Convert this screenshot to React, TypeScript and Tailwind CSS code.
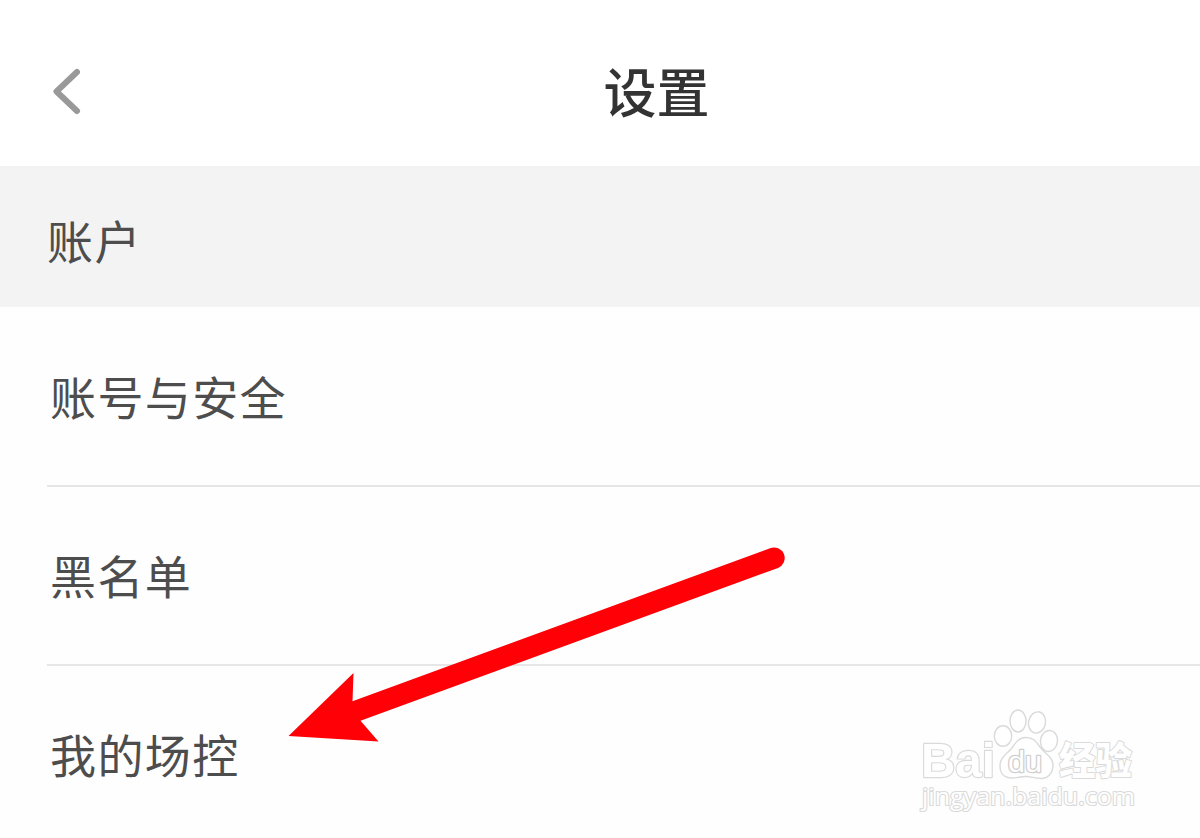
const rows = ['账号与安全', '黑名单', '我的场控'];

function Header() {
  return (
    <header className="relative flex h-[166px] items-center justify-center bg-white pt-[15px] pl-[113px]">
      <button type="button" aria-label="返回" className="absolute top-[66px] left-[48px]">
        <svg width="36" height="50" viewBox="0 0 36 50" fill="none">
          <path
            d="M29 6L8.5 25.5L29 45"
            stroke="#999999"
            strokeWidth="6"
            strokeLinecap="round"
            strokeLinejoin="round"
          />
        </svg>
      </button>
      <h1 className="text-[53px] leading-none font-medium tracking-normal text-[#333333]">设置</h1>
    </header>
  );
}

function Arrow() {
  return (
    <svg className="pointer-events-none absolute top-0 left-0" width="1200" height="838" viewBox="0 0 1200 838">
      <path
        d="M288.5 736L353.5 673L352.5 701.3L770 548.2A10.6 10.6 0 0 1 778 568L360.5 720.7L378.5 741.5Z"
        fill="#ff0006"
      />
    </svg>
  );
}

function Watermark() {
  return (
    <svg
      className="pointer-events-none absolute top-[700px] left-[910px] tracking-normal"
      width="240"
      height="120"
      viewBox="0 0 240 120"
      fill="#ffffff"
      stroke="#dadada"
      strokeWidth="1.4"
      strokeLinejoin="round"
    >
      <text
        className="font-['Liberation_Sans',sans-serif] font-bold"
        x="11"
        y="76.5"
        fontSize="49"
        textLength="74"
        lengthAdjust="spacingAndGlyphs"
        paintOrder="stroke"
        strokeWidth="2.4"
      >
        Bai
      </text>
      <text
        className="font-['Noto_Sans_CJK_SC',sans-serif] font-black"
        x="149"
        y="74"
        fontSize="38"
        textLength="73"
        lengthAdjust="spacingAndGlyphs"
        paintOrder="stroke"
        strokeWidth="2"
      >
        经验
      </text>
      <ellipse cx="93" cy="36" rx="8.7" ry="10.3" />
      <ellipse cx="108" cy="21" rx="8" ry="11" />
      <ellipse cx="127" cy="22.5" rx="8.5" ry="10.7" transform="rotate(12 127 22.5)" />
      <ellipse cx="139" cy="41" rx="8.5" ry="10.5" transform="rotate(8 139 41)" />
      <path d="M116 37.5C109 37.5 106 42 102 48C97 54 90 57 90 66C90 74 95 78 102 78C107 78 111 76.5 116 76.5C121 76.5 125 78.5 131 78.5C138 78.5 143 73 143 65C143 57 135 54 130 47C126 41 123 37.5 116 37.5Z" />
      <text
        className="font-['Liberation_Sans',sans-serif]"
        x="98"
        y="71.5"
        fontSize="29"
        textLength="34"
        lengthAdjust="spacingAndGlyphs"
        paintOrder="stroke"
        stroke="#d0d0d0"
        strokeWidth="2.6"
      >
        du
      </text>
      <text
        className="font-['Open_Sans',sans-serif]"
        x="12"
        y="105"
        fontSize="24"
        textLength="213"
        lengthAdjust="spacingAndGlyphs"
        paintOrder="stroke"
        strokeWidth="2.2"
      >
        jingyan.baidu.com
      </text>
    </svg>
  );
}

export default function App() {
  return (
    <div className="relative h-[838px] w-[1200px] overflow-hidden bg-[#fefefe] font-['Noto_Sans_CJK_SC',sans-serif] text-[46px] leading-none tracking-[1.4px] text-[#4d4d4d]">
      <Header />
      <h2 className="flex h-[141px] items-center bg-[#f3f3f3] pt-[5px] pl-[47px] font-normal">账户</h2>
      <ul className="pt-px pl-[47px]">
        {rows.map((row) => (
          <li key={row} className="flex h-[179px] items-center border-b-2 border-[#e6e6e6] pb-[3px] pl-[3px]">
            {row}
          </li>
        ))}
      </ul>
      <Arrow />
      <Watermark />
    </div>
  );
}
